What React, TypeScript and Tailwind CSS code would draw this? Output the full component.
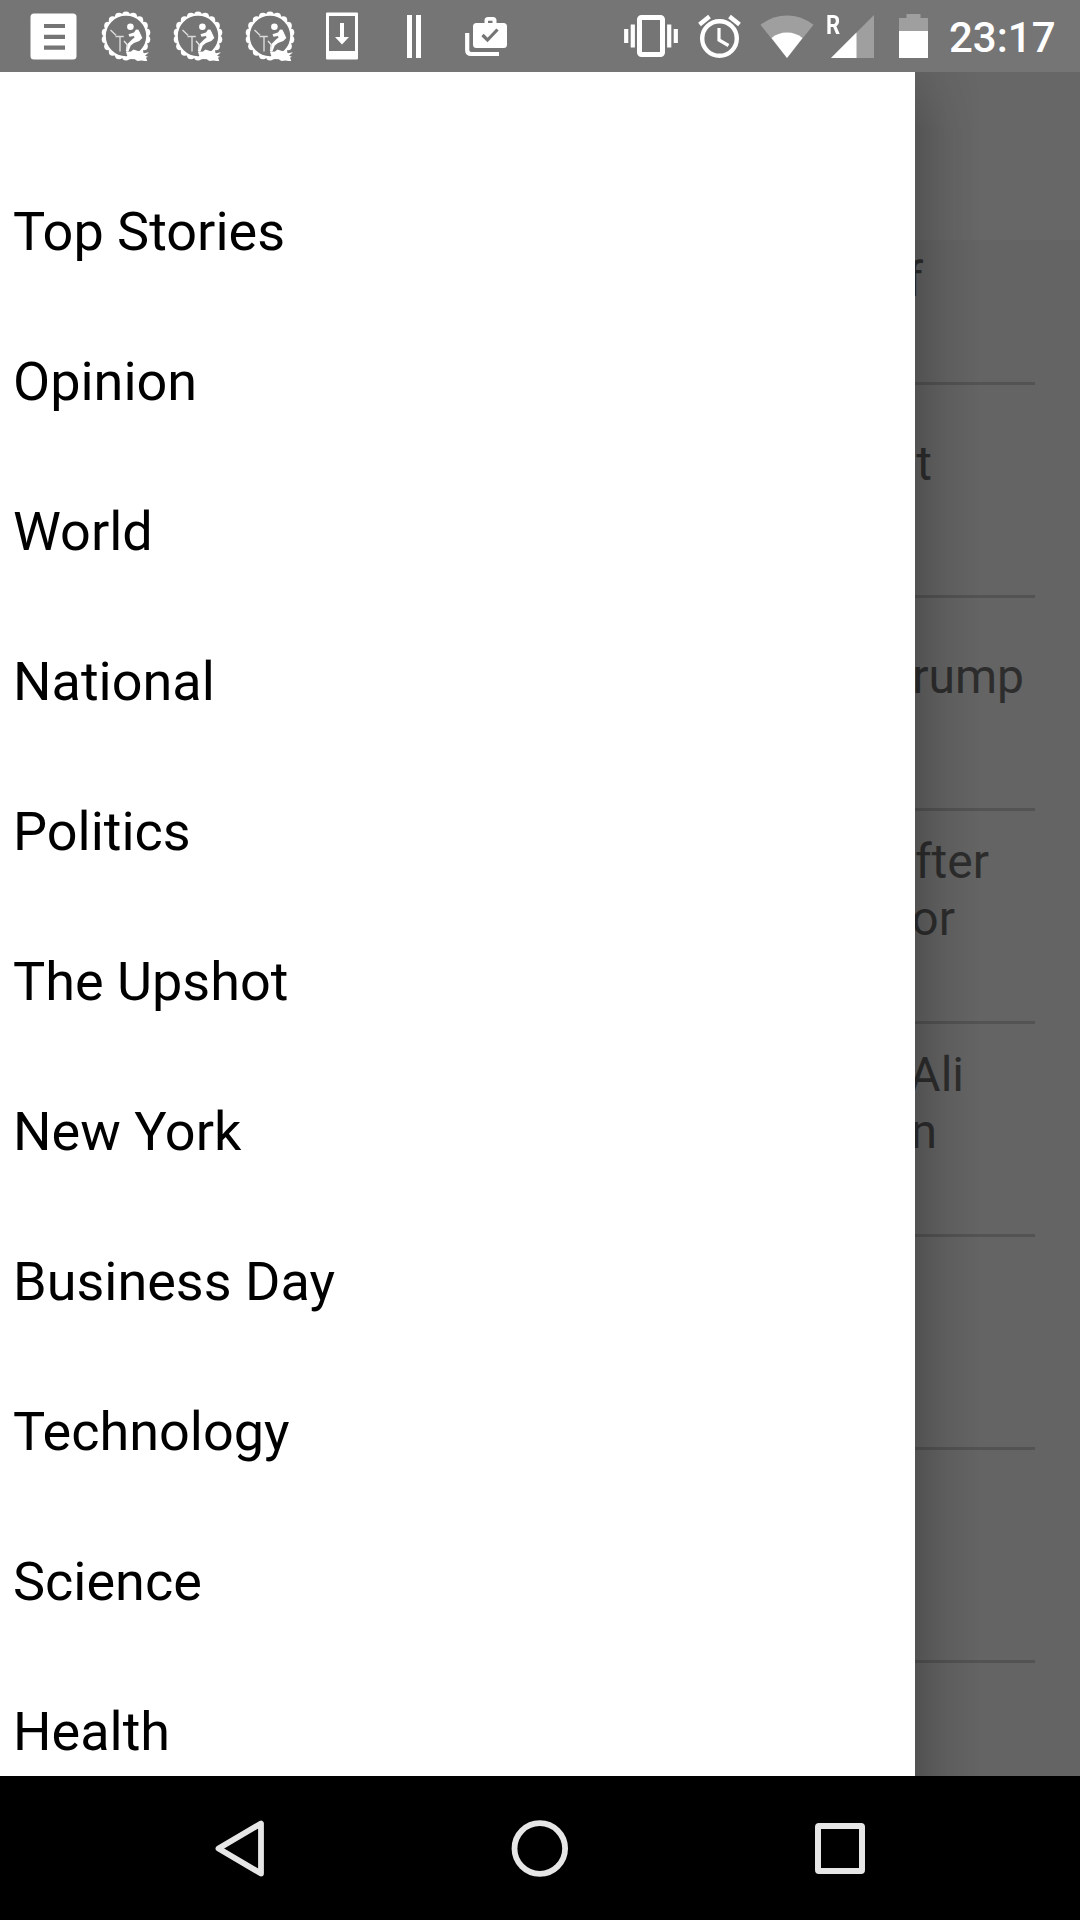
import React from "react";

const sections = [
  "Top Stories",
  "Opinion",
  "World",
  "National",
  "Politics",
  "The Upshot",
  "New York",
  "Business Day",
  "Technology",
  "Science",
  "Health",
];

type Line = { text: string; width: string };

const stories: Line[][] = [
  [{ text: "f", width: "w-[8px]" }],
  [{ text: "t", width: "w-[17px]" }, { text: "", width: "w-0" }],
  [{ text: "rump", width: "w-[109px]" }, { text: "", width: "w-0" }],
  [
    { text: "fter", width: "w-[74px]" },
    { text: "or", width: "w-[40px]" },
    { text: "", width: "w-0" },
  ],
  [
    { text: "Ali", width: "w-[49px]" },
    { text: "n", width: "w-[22px]" },
    { text: "", width: "w-0" },
  ],
  [],
  [],
];

function Runner() {
  const bumps = Array.from({ length: 18 }, (_, i) => {
    const a = ((i * 20 - 90) * Math.PI) / 180;
    return { x: 25 + 20.6 * Math.cos(a), y: 25 + 20.6 * Math.sin(a) };
  });
  return (
    <svg className="h-[50px] w-[50px]" viewBox="0 0 50 50">
      {bumps.map((b, i) => (
        <circle key={i} cx={b.x} cy={b.y} r="4" fill="#fff" />
      ))}
      <circle cx="25" cy="25" r="21.200" fill="#757575" stroke="#fff" strokeWidth="2" />
      <circle cx="29.400" cy="15.700" r="3.300" fill="#fff" />
      <path d="M27.500 23.300l5.500-1.800 2-3 2.500.3 1.800 3.700 2 4.500-3 3-5.300 2-3.200 2.500-2.600 6.500-2.400-.8 1-6.400 5.200-5.300 2.500-2-.5-1.500-4.500.8z" fill="#fff" />
      <path d="M9.500 19l5.500 5.300M14.500 25.500h8.300M19 25.500v15" fill="none" stroke="#dcdcdc" strokeWidth="1.400" />
      <path d="M23 30l3.500 4-1 5" fill="none" stroke="#e4e4e4" strokeWidth="1.400" />
      <path d="M25 41l5-.5 2.500-2 4.500 1.500 4 .3 2 2 5-1-4 3.500 3 1-2 1 1.500 3.700-6-1-4 .5-4-2.500-5 1z" fill="#fff" />
    </svg>
  );
}

function StatusBar() {
  return (
    <header className="flex h-[72px] shrink-0 items-center bg-[#757575] text-white">
      <svg className="ml-[30px] h-[47px] w-[47px]" viewBox="0 0 47 47">
        <rect x="0.500" y="0.500" width="46" height="46" rx="3.500" fill="#fff" />
        <path d="M14 13h21M14 23.800h21M14 34.600h21" stroke="#757575" strokeWidth="4.200" />
      </svg>
      <div className="ml-6 flex gap-[22px]">
        <Runner />
        <Runner />
        <Runner />
      </div>
      <svg className="ml-[30px] h-[48px] w-[34px]" viewBox="0 0 34 48">
        <path fillRule="evenodd" d="M2 .5h30q1 0 1 1v45q0 1-1 1H2q-1 0-1-1v-45q0-1 1-1zM4 4v35h26V4z" fill="#fff" />
        <path d="M15 11h4v14h5l-7 7.500-7-7.500h5z" fill="#fff" />
      </svg>
      <div className="ml-12 flex h-[43px] gap-1">
        <div className="w-[5px] bg-white" />
        <div className="w-[5px] bg-white" />
      </div>
      <svg className="ml-[44px] h-[41px] w-[43px]" viewBox="0 0 43 41">
        <path fillRule="evenodd" d="M11.500 7h8V4.500Q19.500 1 23 1h5q3.500 0 3.500 3.500V7h7Q42 7 42 10.500v18Q42 32 38.500 32h-27Q8 32 8 28.500v-18Q8 7 11.500 7zM23 4.800V7h4.500V4.800z" fill="#fff" />
        <path d="M17.500 19l5 5 10-10.500" fill="none" stroke="#757575" strokeWidth="3.200" />
        <path d="M2.200 17v17q0 4 4 4H34" fill="none" stroke="#fff" strokeWidth="4.200" />
      </svg>
      <svg className="ml-[116px] h-[42px] w-[54px]" viewBox="0 0 54 42">
        <path d="M2.200 14v14M8.800 9.500v23M45.200 9.500v23M51.800 14v14" stroke="#fff" strokeWidth="4.200" />
        <rect x="15.500" y="2.500" width="23" height="37" rx="2" fill="none" stroke="#fff" strokeWidth="5" />
      </svg>
      <svg className="ml-5 h-[44px] w-[44px]" viewBox="0 0 44 44">
        <circle cx="21.500" cy="24.500" r="17.300" fill="none" stroke="#fff" strokeWidth="4.400" />
        <path d="M1.500 10.500l10-8M41.500 10.500l-10-8" stroke="#fff" strokeWidth="4.400" />
        <path d="M21 14v12l9.500 5.500" fill="none" stroke="#fff" strokeWidth="3.200" />
      </svg>
      <svg className="ml-[18px] h-[43px] w-[54px]" viewBox="0 0 54 43">
        <path d="M.5 9.800Q12.500.5 27 .5t26.500 9.300L27 43z" fill="#9f9f9f" />
        <path d="M11.500 23Q18 17.500 27 17.500T42.500 23L27 43z" fill="#fff" />
      </svg>
      <div className="ml-3 flex h-[43px]">
        <div className="h-[22px] w-[13px] origin-left scale-x-85 text-[26px] leading-[20px] font-bold">R</div>
        <svg className="-ml-2 h-[43px] w-[43px]" viewBox="0 0 43 43">
          <path d="M0 43L43 0v43z" fill="#9f9f9f" />
          <path d="M0 43L25.500 17.500V43z" fill="#fff" />
        </svg>
      </div>
      <svg className="ml-[25px] h-[44px] w-[29px]" viewBox="0 0 29 44">
        <path d="M0 4h7.500V0h14v4H29v14H0z" fill="#9f9f9f" />
        <path d="M0 17h29v27H0z" fill="#fff" />
      </svg>
      <span className="ml-[21px] pt-[4px] text-[42px] leading-[48px] font-medium">23:17</span>
    </header>
  );
}

export default function App() {
  return (
    <div className="flex h-[1920px] w-[1080px] flex-col overflow-hidden bg-black font-[Roboto,sans-serif]">
      <StatusBar />
      <main className="flex min-h-0 flex-1">
        <nav className="w-[915px] overflow-hidden bg-white pt-[84px] text-[54px] text-black">
          {sections.map((name) => (
            <div key={name} className="flex h-[150px] items-center pl-[13px] whitespace-nowrap">
              {name}
            </div>
          ))}
        </nav>
        <section className="relative w-[165px] overflow-hidden bg-[#646464] text-[48px] leading-[57px] text-[#2d2d2d]">
          <div className="absolute inset-x-0 top-0 h-[168px] bg-[#676767]" />
          <div className="relative pt-[100px]">
            {stories.map((lines, i) => (
              <div
                key={i}
                className="mr-[45px] flex h-[213px] flex-col justify-center border-b-3 border-[#535353] pt-[4px]"
              >
                {lines.map((line, j) => (
                  <div key={j} className={"flex h-[57px] justify-end " + line.width}>
                    {line.text}
                  </div>
                ))}
              </div>
            ))}
          </div>
          <div className="absolute inset-y-0 left-0 w-[64px] bg-linear-to-r from-black/18 via-black/6 to-transparent mask-[linear-gradient(to_bottom,rgba(0,0,0,0.4),black_60px)]" />
        </section>
      </main>
      <footer className="flex h-36 shrink-0 items-center">
        <svg className="ml-[215px] h-[57px] w-[50px]" viewBox="0 0 50 57">
          <path d="M46 3.500v50L3.500 28.500z" fill="none" stroke="#e6e6e6" strokeWidth="5.800" strokeLinejoin="round" />
        </svg>
        <svg className="ml-[246px] h-[57px] w-[57px]" viewBox="0 0 57 57">
          <circle cx="28.800" cy="28.500" r="25.300" fill="none" stroke="#e6e6e6" strokeWidth="5.800" />
        </svg>
        <svg className="ml-[247px] h-[51px] w-[50px]" viewBox="0 0 50 51">
          <rect x="3" y="3" width="44" height="45" rx="1" fill="none" stroke="#e6e6e6" strokeWidth="6" />
        </svg>
      </footer>
    </div>
  );
}
